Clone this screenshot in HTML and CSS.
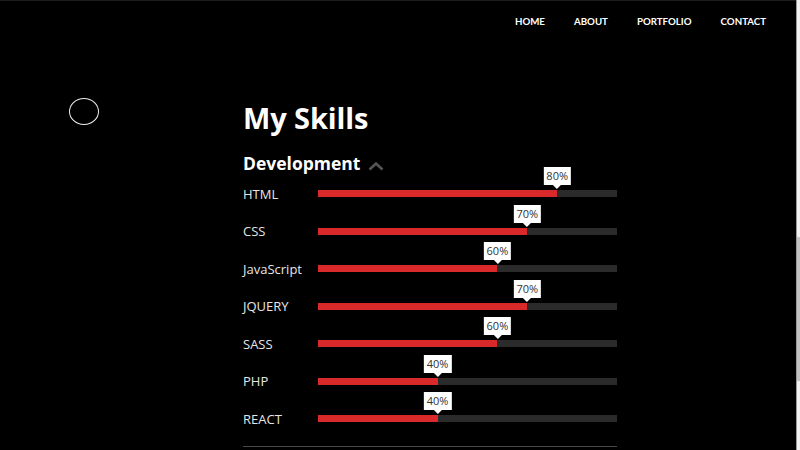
FILE: index.html
```html
<!DOCTYPE html>
<html lang="en">
<head>
<meta charset="utf-8">
<title>My Skills</title>
<link rel="stylesheet" href="styles.css">
</head>
<body>
<div class="page">
  <header class="nav">
    <a class="nav-link" href="#">HOME</a>
    <a class="nav-link" href="#">ABOUT</a>
    <a class="nav-link" href="#">PORTFOLIO</a>
    <a class="nav-link" href="#">CONTACT</a>
  </header>
  <section class="skills">
    <div class="side"><span class="ring"></span></div>
    <div class="content">
      <h1 class="title">My Skills</h1>
      <h2 class="group">Development
        <svg class="chev" width="16" height="10" viewBox="0 0 16 10"><path d="M1.5 8.5 L8 2.5 L14.5 8.5" fill="none" stroke="#555" stroke-width="2.6"/></svg>
      </h2>
      <ul class="list">
        <li class="row"><span class="label">HTML</span><div class="track"><div class="fill" style="width:80%"><span class="tip">80%</span></div></div></li>
        <li class="row"><span class="label">CSS</span><div class="track"><div class="fill" style="width:70%"><span class="tip">70%</span></div></div></li>
        <li class="row"><span class="label">JavaScript</span><div class="track"><div class="fill" style="width:60%"><span class="tip">60%</span></div></div></li>
        <li class="row"><span class="label">JQUERY</span><div class="track"><div class="fill" style="width:70%"><span class="tip">70%</span></div></div></li>
        <li class="row"><span class="label">SASS</span><div class="track"><div class="fill" style="width:60%"><span class="tip">60%</span></div></div></li>
        <li class="row"><span class="label">PHP</span><div class="track"><div class="fill" style="width:40%"><span class="tip">40%</span></div></div></li>
        <li class="row"><span class="label">REACT</span><div class="track"><div class="fill" style="width:40%"><span class="tip">40%</span></div></div></li>
      </ul>
      <div class="rule"></div>
    </div>
  </section>
</div>
<div class="scrollbar"><div class="thumb"></div></div>
</body>
</html>
```
FILE: styles.css
```css
html, body { height: 100%; }
body {
  margin: 0;
  background: #000;
  display: flex;
  overflow: hidden;
  font-family: "Open Sans", "Liberation Sans", sans-serif;
  color: #fff;
}
.page {
  flex: 1;
  border-top: 1px solid #1c1c1c;
}
.nav {
  display: flex;
  justify-content: flex-end;
  gap: 29px;
  padding: 12px 30px 0 0;
  height: 27px;
}
.nav-link {
  color: #fff;
  text-decoration: none;
  font-family: "Lato", sans-serif;
  font-weight: 700;
  font-size: 9.7px;
  line-height: 16px;
}
.skills {
  display: flex;
  padding-top: 58px;
}
.side {
  width: 243px;
  padding-left: 69px;
  box-sizing: border-box;
}
.ring {
  display: block;
  width: 28px;
  height: 25px;
  border: 1px solid #eee;
  border-radius: 50%;
}
.content {
  width: 374px;
}
.title {
  margin: 0;
  font-size: 29px;
  line-height: 36px;
  font-weight: 700;
  letter-spacing: -0.1px;
  padding-top: 2px;
}
.group {
  margin: 15px 0 0;
  font-size: 17.5px;
  line-height: 24px;
  font-weight: 700;
  display: flex;
  align-items: center;
  gap: 8px;
}
.chev { margin-top: 6px; }
.list {
  list-style: none;
  margin: 0;
  padding: 0;
}
.row {
  display: flex;
  align-items: center;
  height: 37.5px;
}
.label {
  width: 75px;
  font-size: 13px;
  color: #e6e6e6;
}
.track {
  flex: 1;
  height: 7px;
  background: #2b2b2b;
}
.fill {
  position: relative;
  height: 100%;
  background: #d9292b;
}
.tip {
  position: absolute;
  right: 0;
  bottom: 12px;
  transform: translateX(50%);
  background: #fff;
  color: #333;
  font-size: 11px;
  line-height: 18px;
  padding: 0 3px;
}
.tip::after {
  content: "";
  position: absolute;
  left: 50%;
  bottom: -4px;
  margin-left: -4px;
  border-left: 4px solid transparent;
  border-right: 4px solid transparent;
  border-top: 4px solid #fff;
}
.rule {
  margin-top: 8px;
  height: 1px;
  background: #4a4a4a;
}
.scrollbar {
  width: 3px;
  background: #f0f0f0;
  padding-top: 237px;
  border-left: 1px solid #999;
}
.thumb {
  height: 144px;
  background: #c2c2c2;
}
```
